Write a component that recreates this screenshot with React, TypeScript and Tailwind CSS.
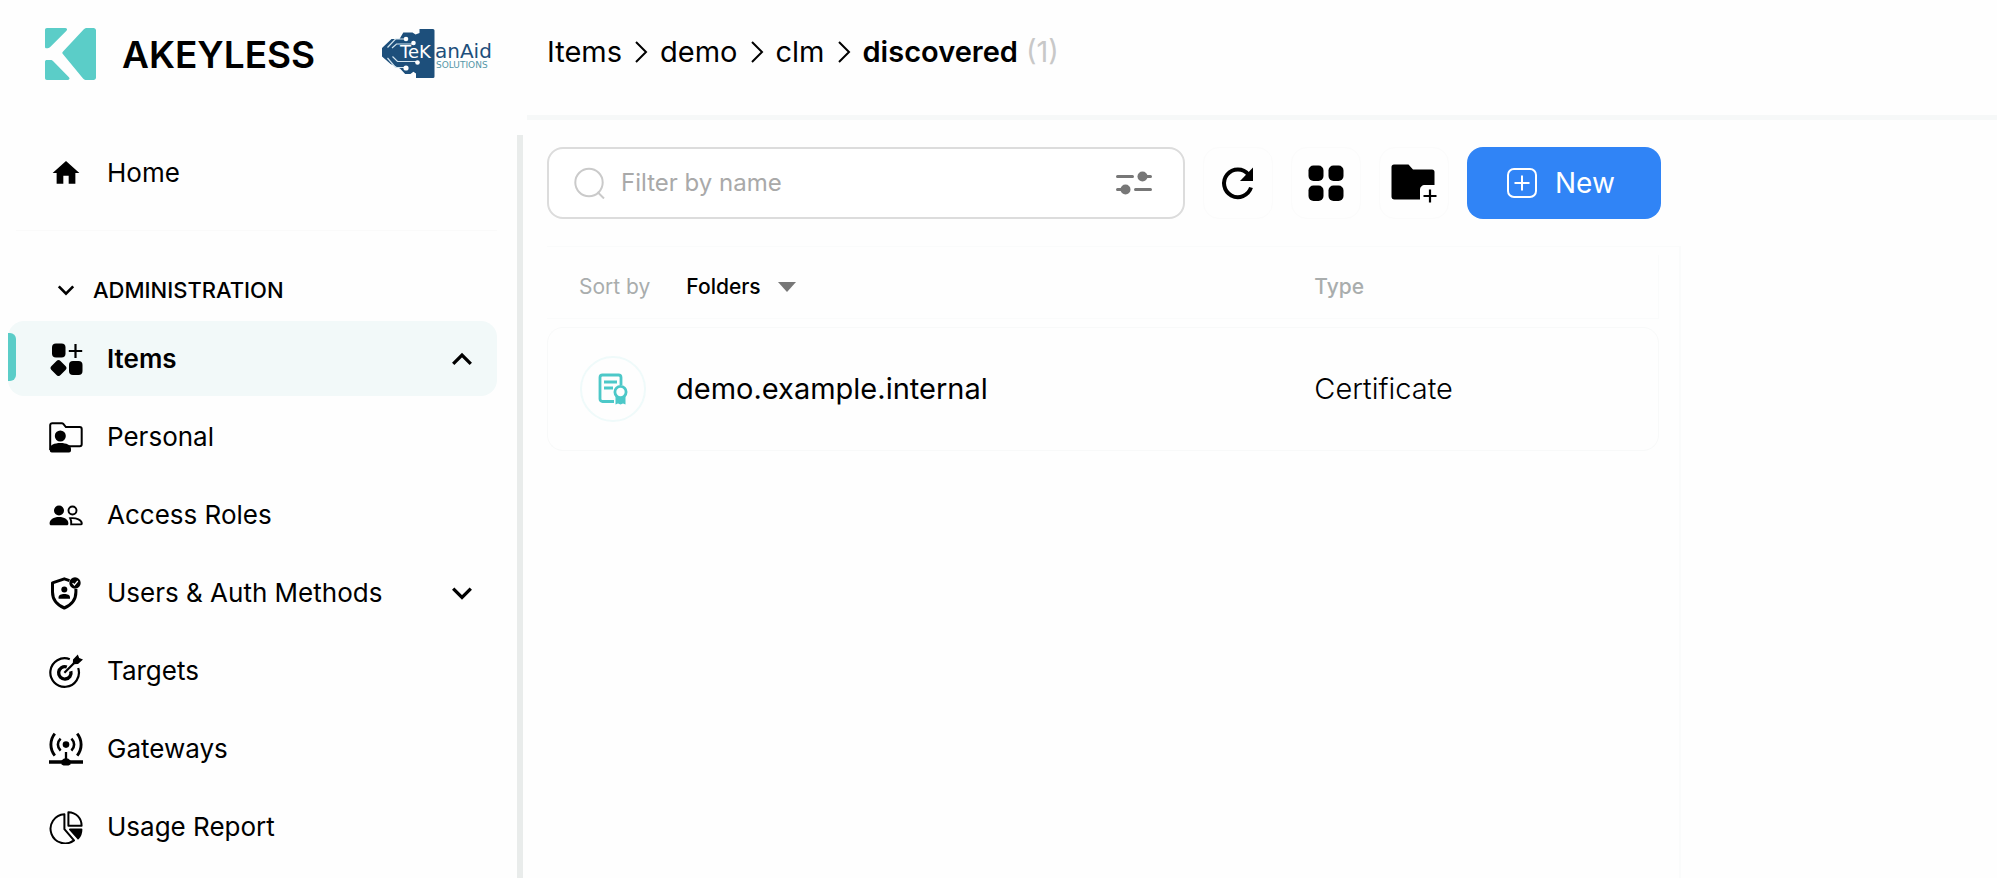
import type { ReactNode } from 'react'

type NavItem = {
    label: string
    icon: ReactNode
    active?: boolean
    chevron?: 'up' | 'down'
}

function Chevron({ dir, size = 20 }: { dir: 'up' | 'down'; size?: number }) {
    return (
        <svg width={size} height={size} viewBox="0 0 20 20" fill="none" stroke="currentColor" strokeWidth="3" aria-hidden="true">
            <path d={dir === 'up' ? 'M2 14.5 10 6.5l8 8' : 'M2 6 10 14l8-8'} />
        </svg>
    )
}

function Crumb({ label }: { label: string }) {
    return (
        <li className="flex items-center">
            <a href="#">{label}</a>
            <svg className="mx-3" width="14" height="22" viewBox="0 0 14 22" fill="none" stroke="currentColor" strokeWidth="2" aria-hidden="true">
                <path d="M2 1l10 10L2 21" />
            </svg>
        </li>
    )
}

const HomeIcon = (
    <svg width="34" height="34" viewBox="-0.7 -0.7 25.4 25.4" fill="currentColor" aria-hidden="true">
        <path d="M10 20v-6h4v6h5v-8h3L12 3 2 12h3v8z" />
    </svg>
)

const ItemsIcon = (
    <svg width="34" height="34" viewBox="0 0 34 34" fill="currentColor" aria-hidden="true">
        <rect x="3" y="1.5" width="13.5" height="14" rx="4" />
        <path d="M26.5 2v14M19.8 9h13.4" stroke="currentColor" strokeWidth="2.2" />
        <path d="M7.500 19a2.800 2.800 0 0 1 4 0l5 5a2.800 2.800 0 0 1 0 4l-5 5a2.800 2.800 0 0 1-4 0l-5-5a2.800 2.800 0 0 1 0-4z" />
        <rect x="20" y="19" width="13.5" height="14" rx="4" />
    </svg>
)

const PersonalIcon = (
    <svg width="34" height="34" viewBox="0 0 34 34" fill="currentColor" aria-hidden="true">
        <path d="M1.2 30V5.2a2 2 0 0 1 2-2h9.6a2 2 0 0 1 1.5.7l2.6 3.2h13.8a2 2 0 0 1 2 2v15.200a2 2 0 0 1-2 2H20" fill="none" stroke="currentColor" strokeWidth="2" />
        <circle cx="11.3" cy="16" r="5.500" />
        <path d="M.8 29c0-4 4.500-6 10.600-6s10.600 2 10.600 6v1.400a2 2 0 0 1-2 2H2.800a2 2 0 0 1-2-2z" />
    </svg>
)

const RolesIcon = (
    <svg width="34" height="34" viewBox="0 0 34 34" fill="currentColor" aria-hidden="true">
        <circle cx="10" cy="12.500" r="5" />
        <path d="M.6 25.500c0-4 4-6.500 9.400-6.500s9.400 2.500 9.400 6.500c0 1-.6 1.800-1.600 1.800H2.200c-1 0-1.600-.8-1.600-1.800z" />
        <g fill="none" stroke="currentColor" strokeWidth="1.900">
            <circle cx="23.500" cy="12.500" r="4" />
            <path d="M21.200 20.200c6.500-.6 11.600 1.800 11.600 5.200 0 .6-.4 1-1 1h-9.600c.3-2.600-.1-4.600-1-6.200z" />
        </g>
    </svg>
)

const UsersIcon = (
    <svg width="34" height="34" viewBox="0 0 34 34" fill="currentColor" aria-hidden="true">
        <path d="M20.500 4.600 15.300 2.800 3.500 6.800V16c0 7.600 4.800 13 11.800 16 7-3 11.600-8.400 11.600-16v-3" fill="none" stroke="currentColor" strokeWidth="3" strokeLinejoin="round" />
        <circle cx="15.300" cy="13.600" r="3" />
        <path d="M9.600 22.800v-1.600c0-2 2.600-3.200 5.700-3.200s5.700 1.200 5.700 3.200v1.600z" />
        <circle cx="26" cy="7" r="5.700" />
        <path d="m23.600 7.200 1.800 1.800 3.400-4" fill="none" stroke="white" strokeWidth="1.200" />
    </svg>
)

const TargetsIcon = (
    <svg width="34" height="34" viewBox="0 0 34 34" fill="none" stroke="currentColor" aria-hidden="true">
        <path d="M20.800 5.200A14.300 14.300 0 1 0 29.200 14" strokeWidth="2.200" />
        <path d="M17.800 13A6.200 6.200 0 1 0 21.800 17.200" strokeWidth="3.400" />
        <path d="m15.400 18.800 11-11" strokeWidth="2.200" />
        <path d="M23.800 10.200 24 5.400 28.800.4l1.400 3.600 3.800 1.400-5 4.600z" fill="currentColor" stroke="none" />
    </svg>
)

const GatewaysIcon = (
    <svg width="34" height="34" viewBox="0 0 34 34" fill="none" stroke="currentColor" aria-hidden="true">
        <circle cx="17" cy="12.600" r="3.300" fill="currentColor" stroke="none" />
        <path d="M11.600 6.600c-3.600 3.400-3.600 8.600 0 12M22.400 6.600c3.600 3.400 3.600 8.600 0 12" strokeWidth="2.600" />
        <path d="M5.800 1.600c-5.200 6.400-5.200 15.600 0 22M28.200 1.600c5.200 6.400 5.200 15.600 0 22" strokeWidth="2.900" />
        <path d="M17 20v9" strokeWidth="2.300" />
        <path d="M0 30h34" strokeWidth="3.400" />
        <path d="M12.500 28.500 15 26.500h4l2.500 2v4l-2 1h-5l-2-1z" fill="currentColor" stroke="none" />
    </svg>
)

const UsageIcon = (
    <svg width="34" height="34" viewBox="0 0 34 34" fill="none" stroke="currentColor" strokeWidth="2" strokeLinejoin="round" aria-hidden="true">
        <path d="M15.400 4.200v15l9.600 11.200A14.600 14.600 0 1 1 15.400 4.200z" />
        <path d="M19.400 2.200v13.600h13.200C32.600 8 27 2.400 19.400 2.200z" />
        <path d="M21 19.400h11.400c0 3.500-1.200 6.500-3.300 9z" fill="currentColor" />
    </svg>
)

const adminItems: NavItem[] = [
    { label: 'Items', icon: ItemsIcon, active: true, chevron: 'up' },
    { label: 'Personal', icon: PersonalIcon },
    { label: 'Access Roles', icon: RolesIcon },
    { label: 'Users & Auth Methods', icon: UsersIcon, chevron: 'down' },
    { label: 'Targets', icon: TargetsIcon },
    { label: 'Gateways', icon: GatewaysIcon },
    { label: 'Usage Report', icon: UsageIcon },
]

function NavLink({ item }: { item: NavItem }) {
    return (
        <a
            href="#"
            className={`relative flex h-[75px] items-center gap-6 rounded-2xl pl-[41px] pr-6 text-[26px] ${item.active ? 'bg-[#f2f9f9] font-semibold' : ''}`}
        >
            {item.active && <span className="absolute left-0 top-3 h-12 w-2 rounded-r-md bg-[#5bcdc8]" />}
            {item.icon}
            <span className="flex-1">{item.label}</span>
            {item.chevron && <Chevron dir={item.chevron} size={22} />}
        </a>
    )
}

function AkeylessLogo() {
    return (
        <a href="#" className="flex items-center gap-[26px]">
            <svg width="51" height="52" viewBox="0 0 52 54" preserveAspectRatio="none" fill="#5bcdc8" aria-hidden="true">
                <path d="M2 0h18.500c2 0 2.600 1.600 1.400 2.800L5.600 19.400C4.400 20.600 3 21 1.600 21 .6 21 0 20.400 0 19.400V2C0 .8.800 0 2 0z" />
                <path d="M2 54h21c2 0 2.600-1.500 1.400-2.800L8.400 34.600C7.600 33.600 6.800 33.200 5.600 33.200H2c-1.200 0-2 .6-2 1.800v17c0 1.200.8 2 2 2z" />
                <path d="M39.600 1.400C40.600.4 41.600 0 43 0h6.400C51 0 52 1 52 2.600v48.800c0 1.600-1 2.600-2.600 2.600h-7c-1.600 0-2.400-.4-3.400-1.400L18.400 27.200c-1-1.200-1-1.800 0-2.800z" />
            </svg>
            <span className="text-[37px] font-semibold leading-none">AKEYLESS</span>
        </a>
    )
}

function TekanaidLogo() {
    return (
        <svg width="118" height="52" viewBox="0 0 118 52" role="img" aria-label="TeKanAid Solutions">
            <path
                d="M38.500 1h13.500a1.500 1.500 0 0 1 1.500 1.500v46a1.500 1.500 0 0 1-1.500 1.500H35v-4.500l-2.600-1.800-3 2.300h-5.200L19 40.600 9.600 36 1 28.500v-8.500L10.500 11H18.500l3.800-6.500h9.200l3 2 4-1.500z"
                fill="#1d4f7b"
            />
            <g fill="none" stroke="#d3e5ef" strokeWidth="1.200">
                <path d="m6.500 19.500 8-8.500h10M11 20l4.500-4h16.500M6.500 30l8 9.500h10M11.500 28.500l5 5H36" />
            </g>
            <g fill="white">
                <circle cx="25" cy="11" r="2.300" />
                <circle cx="32.500" cy="15" r="2.300" />
                <circle cx="25" cy="40" r="2.600" />
                <circle cx="36.500" cy="34.500" r="2.300" />
            </g>
            <g fontFamily="DejaVu Sans, sans-serif">
                <text x="19" y="30" fontSize="18" fill="white">TeK</text>
                <text x="54" y="30" fontSize="20" fill="#1d4f7b">anAid</text>
                <text x="55" y="40" fontSize="9" fill="#5596a8">SOLUTIONS</text>
            </g>
        </svg>
    )
}

function Sidebar() {
    return (
        <aside className="flex w-[523px] shrink-0 flex-col">
            <div className="flex h-[135px] items-start justify-between pl-[45px] pr-6 pt-7">
                <AkeylessLogo />
                <TekanaidLogo />
            </div>
            <nav className="flex-1 border-r-[6px] border-[#e9eceb] pl-2 pr-5">
                <NavLink item={{ label: 'Home', icon: HomeIcon }} />
                <hr className="mb-7 ml-2 mt-5 border-[#fafafa]" />
                <button className="flex h-[62px] w-full items-center gap-[18px] pl-[49px] text-[22px] font-medium">
                    <Chevron dir="down" size={18} />
                    ADMINISTRATION
                </button>
                <div className="flex flex-col gap-[3px]">
                    {adminItems.map((item) => (
                        <NavLink key={item.label} item={item} />
                    ))}
                </div>
            </nav>
        </aside>
    )
}

function Toolbar() {
    const toolClass = 'flex h-[72px] w-[70px] shrink-0 items-center justify-center rounded-2xl border border-[#fbfbfb]'

    return (
        <div className="flex gap-[18px] pr-5">
            <div className="flex h-[72px] flex-1 items-center rounded-2xl border-2 border-[#dcdcdc] bg-white pl-6 pr-[31px]">
                <svg width="32" height="32" viewBox="0 0 32 32" fill="none" stroke="#cacaca" strokeWidth="2" aria-hidden="true">
                    <circle cx="16" cy="15.500" r="13.700" />
                    <path d="m24.500 25 6.500 6.500" />
                </svg>
                <input
                    type="text"
                    aria-label="Filter by name"
                    placeholder="Filter by name"
                    className="ml-4 min-w-0 flex-1 bg-transparent text-2xl outline-none placeholder:text-[#a9a9a9]"
                />
                <button aria-label="Filters">
                    <svg width="36" height="26" viewBox="0 0 36 26" fill="#777777" aria-hidden="true">
                        <path d="M1.500 6.500h15M19.500 19.500h15M24 6.500h10.500M1.500 19.500h10" stroke="#777777" strokeWidth="3" strokeLinecap="round" />
                        <circle cx="26.500" cy="6.500" r="5" />
                        <circle cx="9.500" cy="19.500" r="5" />
                    </svg>
                </button>
            </div>
            <button aria-label="Refresh" className={toolClass}>
                <svg width="36" height="36" viewBox="0 0 36 36" fill="none" aria-hidden="true">
                    <path d="M28.500 9.500A13.800 13.800 0 1 0 31 22.500" stroke="currentColor" strokeWidth="4" />
                    <path d="M33 2.500V16H20z" fill="currentColor" />
                </svg>
            </button>
            <button aria-label="Grid view" className={toolClass}>
                <svg width="36" height="36" viewBox="0 0 36 36" fill="currentColor" aria-hidden="true">
                    <rect x="0.500" y="0.500" width="15" height="15.500" rx="5" />
                    <rect x="20.500" y="0.500" width="15" height="15.500" rx="5" />
                    <rect x="0.500" y="20.500" width="15" height="15.500" rx="5" />
                    <rect x="20.500" y="20.500" width="15" height="15.500" rx="5" />
                </svg>
            </button>
            <button aria-label="New folder" className={toolClass}>
                <svg width="46" height="40" viewBox="0 0 46 40" fill="currentColor" aria-hidden="true">
                    <path d="M3 1.500h14.500l4.500 5h19a2.500 2.500 0 0 1 2.500 2.500v13H34c-3 0-5 2-5 5v9.500H3.500A3 3 0 0 1 .5 33.500V4a2.500 2.500 0 0 1 2.500-2.500z" />
                    <path d="M39 26.500v13M32.500 33H45.500" stroke="currentColor" strokeWidth="2.200" />
                </svg>
            </button>
            <button className="flex h-[72px] w-[194px] shrink-0 items-center gap-[18px] rounded-2xl bg-[#3084f6] pl-10 text-[28px] text-white">
                <svg width="30" height="30" viewBox="0 0 30 30" fill="none" stroke="currentColor" strokeWidth="2" aria-hidden="true">
                    <rect x="1" y="1" width="28" height="28" rx="6" />
                    <path d="M15 7.500v15M7.500 15h15" />
                </svg>
                New
            </button>
        </div>
    )
}

function ItemsTable() {
    return (
        <div className="mt-[27px] flex-1 border-r-2 border-t border-[#fafbfb] pr-5">
            <table className="w-full border-separate border-spacing-x-0 border-spacing-y-2 text-left">
                <thead>
                    <tr className="h-16 text-[21px] text-[#a9adad]">
                        <th className="w-[69%] border-b border-[#fafbfb] pl-8 font-normal">
                            <div className="flex items-center">
                                <label htmlFor="sort">Sort by</label>
                                <select id="sort" className="ml-9 appearance-none bg-transparent font-medium text-black">
                                    <option>Folders</option>
                                </select>
                                <svg className="ml-4" width="20" height="12" viewBox="0 0 20 12" fill="#777777" aria-hidden="true">
                                    <path d="M1 1h18l-9 10z" />
                                </svg>
                            </div>
                        </th>
                        <th className="border-b border-r border-[#fafbfb] font-medium">Type</th>
                    </tr>
                </thead>
                <tbody>
                    <tr className="h-[124px] text-[29px]">
                        <td className="rounded-l-2xl border-y border-l border-[#f8f9f9] pl-8">
                            <div className="flex items-center gap-[30px]">
                                <span className="flex size-[66px] items-center justify-center rounded-full border-2 border-[#effafa]">
                                    <svg width="30" height="32" viewBox="0 0 30 32" fill="none" stroke="#4cc8c8" strokeWidth="2.800" aria-hidden="true">
                                        <path d="M16 28.500H4.500A2.500 2.500 0 0 1 2 26V4.500A2.500 2.500 0 0 1 4.500 2h16A2.500 2.500 0 0 1 23 4.500V12M6 9h13M6 15h9" />
                                        <circle cx="22.500" cy="19" r="5.600" />
                                        <path d="M17.500 23v8.500l2.500-1 2.500 1 2.500-1 2.500 1V23a8 8 0 0 1-10 0z" fill="#4cc8c8" stroke="none" />
                                    </svg>
                                </span>
                                <a href="#">demo.example.internal</a>
                            </div>
                        </td>
                        <td className="rounded-r-2xl border-y border-r border-[#f8f9f9] font-light">Certificate</td>
                    </tr>
                </tbody>
            </table>
        </div>
    )
}

export default function App() {
    return (
        <div className="flex min-h-screen bg-[#fefefe] font-['Inter',sans-serif] text-black">
            <Sidebar />
            <main className="flex min-w-0 flex-1 flex-col">
                <header className="ml-1 h-[120px] border-b-[5px] border-[#f6f8f8] pl-5 pt-8">
                    <nav aria-label="Breadcrumb">
                        <ol className="flex items-center text-[29px] leading-10">
                            <Crumb label="Items" />
                            <Crumb label="demo" />
                            <Crumb label="clm" />
                            <li>
                                <span className="font-semibold">discovered</span>
                                <span className="ml-2 text-[#c8c8c8]">(1)</span>
                            </li>
                        </ol>
                    </nav>
                </header>
                <section className="ml-6 mt-[27px] flex w-full max-w-[1134px] flex-1 flex-col">
                    <Toolbar />
                    <ItemsTable />
                </section>
            </main>
        </div>
    )
}
